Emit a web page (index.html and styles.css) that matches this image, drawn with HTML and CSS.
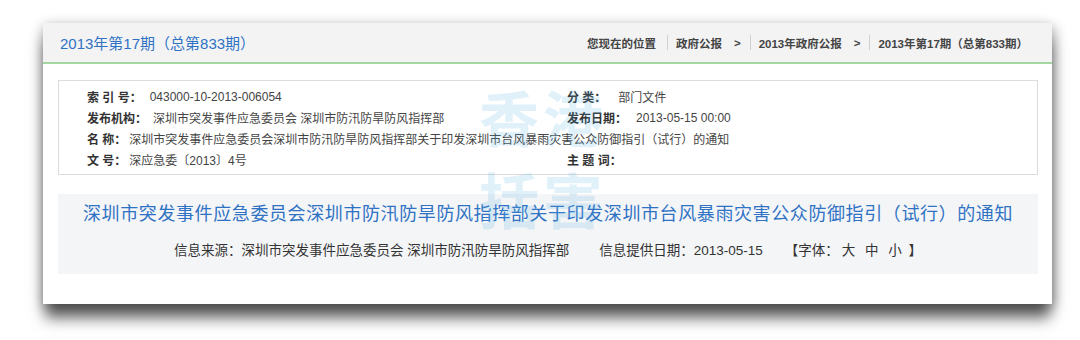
FILE: index.html
```html
<!DOCTYPE html>
<html lang="zh-CN">
<head>
<meta charset="utf-8">
<title>2013年第17期（总第833期）</title>
<link rel="stylesheet" href="styles.css">
</head>
<body>
<div class="card">
  <div class="header">
    <div class="issue">2013年第17期（总第833期）</div>
    <div class="crumbs">
      <span>您现在的位置</span><span class="sep"></span>
      <span>政府公报</span><span class="arrow">&gt;</span><span class="sep"></span>
      <span>2013年政府公报</span><span class="arrow">&gt;</span><span class="sep"></span>
      <span>2013年第17期（总第833期）</span>
    </div>
  </div>
  <div class="content">
    <div class="info">
      <div class="cell"><b class="lbl">索 引 号：</b><span class="val v-index">043000-10-2013-006054</span></div>
      <div class="cell"><b class="lbl">分 类：</b><span class="val v-cat">部门文件</span></div>
      <div class="cell"><b class="lbl">发布机构：</b><span class="val v-org">深圳市突发事件应急委员会 深圳市防汛防旱防风指挥部</span></div>
      <div class="cell"><b class="lbl">发布日期：</b><span class="val v-date">2013-05-15 00:00</span></div>
      <div class="cell wide"><b class="lbl">名 称：</b><span class="val v-name">深圳市突发事件应急委员会深圳市防汛防旱防风指挥部关于印发深圳市台风暴雨灾害公众防御指引（试行）的通知</span></div>
      <div class="cell"><b class="lbl">文 号：</b><span class="val v-num">深应急委〔2013〕4号</span></div>
      <div class="cell"><b class="lbl">主 题 词：</b><span class="val"></span></div>
    </div>
    <div class="titlebox">
      <h1 class="title">深圳市突发事件应急委员会深圳市防汛防旱防风指挥部关于印发深圳市台风暴雨灾害公众防御指引（试行）的通知</h1>
      <div class="meta">
        <span>信息来源：深圳市突发事件应急委员会 深圳市防汛防旱防风指挥部</span>
        <span>信息提供日期：2013-05-15</span>
        <span class="fontsize">【字体：<a>大</a> <a>中</a> <a>小</a> 】</span>
      </div>
    </div>
  </div>
  <div class="watermark"><span>香港</span><span>括害</span></div>
</div>
</body>
</html>
```

FILE: styles.css
```css
* { box-sizing: border-box; }
html, body {
  margin: 0;
  padding: 0;
  background: #ffffff;
}
body {
  width: 1080px;
  height: 340px;
  overflow: hidden;
  font-family: "Liberation Sans", "Noto Sans CJK SC", sans-serif;
  color: #333;
}
.card {
  position: relative;
  margin: 23px 0 0 43px;
  width: 1009px;
  height: 281px;
  background: #fff;
  box-shadow: 0 16px 14px -2px rgba(0,0,0,0.6), -2px 2px 12px rgba(0,0,0,0.18), 4px 4px 12px rgba(0,0,0,0.2);
}
.header {
  height: 41px;
  background: #f3f3f4;
  border-bottom: 2px solid #a3d6a0;
  display: flex;
  align-items: center;
  justify-content: space-between;
  padding: 0 24px 0 17px;
}
.issue {
  color: #2f72c4;
  font-size: 15px;
}
.crumbs {
  display: flex;
  align-items: center;
  font-size: 11.5px;
  font-weight: bold;
  color: #444;
}
.crumbs .sep {
  display: inline-block;
  width: 1px;
  height: 15px;
  background: #d0d0d0;
  margin: 0 8px 0 11px;
}
.crumbs .arrow {
  margin-left: 12px;
  margin-right: -2px;
}
.content {
  padding: 16px 14px 0 15px;
}
.info {
  border: 1px solid #dcdcdc;
  padding: 5px 0 4px 28px;
  display: grid;
  grid-template-columns: 480px 1fr;
  grid-auto-rows: 21px;
  font-size: 12px;
}
.cell {
  display: flex;
  align-items: center;
  white-space: nowrap;
}
.cell.wide {
  grid-column: 1 / 3;
}
.lbl {
  color: #333;
  font-weight: bold;
}
.val {
  color: #444;
  margin-left: 6px;
}
.v-index { margin-left: 8px; }
.v-cat { margin-left: 12px; }
.v-org { margin-left: 6px; }
.v-date { margin-left: 9px; }
.v-name { margin-left: 3px; }
.v-num { margin-left: 3px; }
.titlebox {
  margin-top: 19px;
  height: 80px;
  background: #f4f5f7;
  display: flex;
  flex-direction: column;
  align-items: center;
  padding-top: 6px;
}
.title {
  margin: 0;
  font-size: 18px;
  font-weight: normal;
  letter-spacing: 0.6px;
  color: #2f72c4;
  line-height: 28px;
}
.meta {
  margin-top: 11px;
  font-size: 13.5px;
  color: #333;
  display: flex;
  gap: 30px;
}
.fontsize { margin-left: -8px; }
.fontsize a { margin: 0 3px; }
.watermark {
  position: absolute;
  left: 436px;
  top: 52px;
  display: flex;
  flex-direction: column;
  font-family: "Noto Sans CJK SC", sans-serif;
  font-weight: bold;
  font-size: 60px;
  line-height: 82px;
  letter-spacing: 4px;
  color: rgba(90, 175, 225, 0.18);
  pointer-events: none;
}
```
